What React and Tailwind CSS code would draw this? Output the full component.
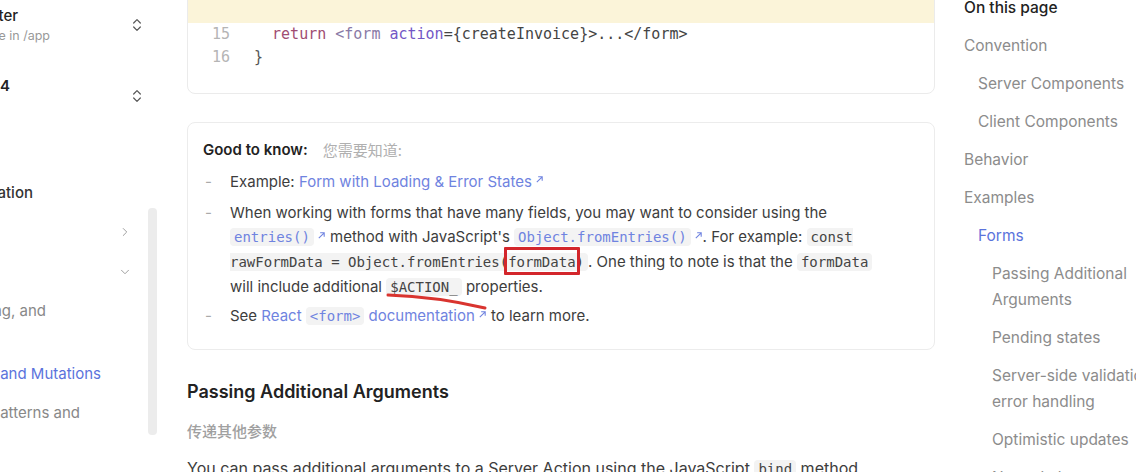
import React from 'react';
import { ChevronsUpDown, ChevronRight, ChevronDown } from 'lucide-react';

// small "external link" arrow used after doc links
const Ext = () => (
  <svg className="inline-block w-[9px] h-[9px] ml-[3px] mb-[6px] align-middle" viewBox="0 0 10 10" fill="none" stroke="currentColor" strokeWidth="1.2">
    <path d="M2 8L8 2M3.5 2H8v4.5" />
  </svg>
);

const Code = ({ children, link }) => (
  <code className={`font-['DejaVu_Sans_Mono',monospace] text-[14px] bg-[#f3f3f3] rounded px-[4px] py-[1px] ${link ? 'text-[#6f83e0]' : 'text-[#444]'}`}>
    {children}
  </code>
);

// text that is cut off by the left edge of the sidebar
const Clip = ({ end, children, className }) => (
  <div className={`flex justify-end ${className}`} style={{ width: end }}>
    <span className="whitespace-nowrap shrink-0">{children}</span>
  </div>
);

const Sidebar = () => (
  <div className="w-[187px] shrink-0 flex overflow-hidden">
    <div className="w-[148px] shrink-0 flex flex-col">
      {/* router switcher */}
      <div className="mt-[6px] h-[40px] flex items-center justify-between pr-[3px]">
        <div className="flex flex-col">
          <Clip end={18} className="h-[20px] items-center text-[15px] font-medium text-[#222]">App Router</Clip>
          <Clip end={50} className="h-[20px] items-center text-[12.5px] text-[#999]">Features available in /app</Clip>
        </div>
        <ChevronsUpDown size={16} strokeWidth={1.8} className="text-[#555] -mt-[2px]" />
      </div>
      {/* version switcher */}
      <div className="mt-[30px] h-[38px] flex items-center justify-between pr-[3px]">
        <div className="flex flex-col">
          <Clip end={10} className="h-[20px] items-center text-[15px] font-semibold text-[#222]">Version 14</Clip>
          <Clip end={0} className="h-[18px] items-center text-[12.5px] text-[#999]">v14</Clip>
        </div>
        <ChevronsUpDown size={16} strokeWidth={1.8} className="text-[#555] mt-[2px]" />
      </div>

      <Clip end={33} className="mt-[66px] h-[26px] items-center text-[15px] font-medium text-[#333]">Building Your Application</Clip>

      <div className="mt-[13px] h-[26px] flex items-center justify-end pr-[16px]">
        <ChevronRight size={14} strokeWidth={1.6} className="text-[#999]" />
      </div>
      <div className="mt-[14px] h-[26px] flex items-center justify-end pr-[16px]">
        <ChevronDown size={14} strokeWidth={1.6} className="text-[#999]" />
      </div>

      <Clip end={46} className="mt-[13px] h-[26px] items-center text-[15px] text-[#888]">Fetching, Caching, and</Clip>
      <Clip end={0} className="h-[24px] items-center text-[15px] text-[#888]">Revalidating</Clip>

      <Clip end={101} className="mt-[13px] h-[26px] items-center text-[15px] text-[#5b73dc]">Server Actions and Mutations</Clip>

      <Clip end={80} className="mt-[13px] h-[26px] items-center text-[15px] text-[#888]">Data Fetching Patterns and</Clip>
      <Clip end={0} className="h-[24px] items-center text-[15px] text-[#888]">Best Practices</Clip>
    </div>
    {/* scrollbar */}
    <div className="w-[9px] shrink-0 mt-[208px] h-[227px] bg-[#ececec] rounded-sm" />
  </div>
);

const CodeBlock = () => (
  <div className="-mt-[10px] border border-[#ebebeb] rounded-lg overflow-hidden font-['DejaVu_Sans_Mono',monospace] text-[15px] pb-[24px]">
    <div className="h-[32px] bg-[#fbf4d9]" />
    <div className="flex h-[23px] items-center pl-[24px]">
      <span className="w-[42px] text-[#b5b5b5]">15</span>
      <span className="whitespace-pre text-[#444]">
        {'  '}<span className="text-[#a04d72]">return</span> <span className="text-[#8a7aa6]">&lt;form</span> <span className="text-[#7357c6]">action</span>={'{'}createInvoice{'}'}&gt;...&lt;/form&gt;
      </span>
    </div>
    <div className="flex h-[23px] items-center pl-[24px]">
      <span className="w-[42px] text-[#b5b5b5]">16</span>
      <span className="text-[#555]">{'}'}</span>
    </div>
  </div>
);

const GoodToKnow = () => (
  <div className="mt-[28px] border border-[#ececec] rounded-lg px-[15px] pt-[15px] pb-[20px] text-[15px] text-[#3d3d3d] leading-[23.7px]">
    <div className="flex items-center gap-[15px]">
      <span className="font-semibold text-[#222]">Good to know:</span>
      <span className="text-[#b0b0b0] font-['Noto_Sans_CJK_SC',sans-serif] text-[15px]">您需要知道:</span>
    </div>
    <ul className="mt-[8px] flex flex-col">
      <li className="flex">
        <span className="w-[27px] shrink-0 pl-[2px] text-[#aaa]">-</span>
        <span>Example: <span className="text-[#6f83e0]">Form with Loading &amp; Error States<Ext /></span></span>
      </li>
      <li className="flex mt-[8px]">
        <span className="w-[27px] shrink-0 pl-[2px] text-[#aaa]">-</span>
        <span className="w-[664px]">
          When working with forms that have many fields, you may want to consider using the{' '}
          <Code link>entries()</Code><span className="text-[#6f83e0]"><Ext /></span> method with JavaScript's{' '}
          <Code link>Object.fromEntries()</Code><span className="text-[#6f83e0]"><Ext /></span>. For example:{' '}
          <code className="font-['DejaVu_Sans_Mono',monospace] text-[14px] bg-[#f3f3f3] rounded px-[4px] py-[1px] text-[#444]">
            const rawFormData = Object.fromEntries
            <span className="relative">
              (formData)
              <span className="absolute left-[4px] right-[4px] -top-[7px] -bottom-[5px] border-[3px] border-[#d3262b] rounded-[1px]" />
            </span>
          </code>
          . One thing to note is that the <Code>formData</Code> will include additional{' '}
          <span className="relative">
            <Code>$ACTION_</Code>
            <svg className="absolute left-[1px] top-[16px] w-[100px] h-[18px] overflow-visible" viewBox="0 0 100 18" fill="none">
              <path d="M1 2 C30 3, 68 8, 98 15" stroke="#d9342f" strokeWidth="3" strokeLinecap="round" />
            </svg>
          </span>{' '}
          properties.
        </span>
      </li>
      <li className="flex mt-[5px]">
        <span className="w-[27px] shrink-0 pl-[2px] text-[#aaa]">-</span>
        <span>
          See <span className="text-[#6f83e0]">React <Code link>&lt;form&gt;</Code> documentation<Ext /></span> to learn more.
        </span>
      </li>
    </ul>
  </div>
);

const toc = [
  { t: ['Convention'], l: 0 },
  { t: ['Server Components'], l: 1 },
  { t: ['Client Components'], l: 1 },
  { t: ['Behavior'], l: 0 },
  { t: ['Examples'], l: 0 },
  { t: ['Forms'], l: 1, active: true },
  { t: ['Passing Additional', 'Arguments'], l: 2 },
  { t: ['Pending states'], l: 2 },
  { t: ['Server-side validation and', 'error handling'], l: 2 },
  { t: ['Optimistic updates'], l: 2 },
  { t: ['Nested elements'], l: 2 },
];

const Toc = () => (
  <div className="ml-[29px] flex-1 overflow-hidden">
    <div className="-mt-[5px] w-[240px] flex flex-col gap-[12px] text-[15.5px] leading-[26px]">
      <div className="font-medium text-[#222]">On this page</div>
      {toc.map((i) => (
        <div
          key={i.t[0]}
          className={`whitespace-nowrap ${i.l === 0 ? '' : i.l === 1 ? 'pl-[14px]' : 'pl-[28px]'} ${i.active ? 'text-[#5b73dc]' : 'text-[#8c8c8c]'}`}
        >
          {i.t.map((line) => (
            <div key={line}>{line}</div>
          ))}
        </div>
      ))}
    </div>
  </div>
);

export default function App() {
  return (
    <div className="w-[1136px] h-[472px] overflow-hidden bg-white flex font-[Inter,'Noto_Sans_CJK_SC',sans-serif]">
      <Sidebar />
      <main className="w-[748px] shrink-0">
        <CodeBlock />
        <GoodToKnow />
        <h2 className="mt-[28px] text-[18px] leading-[28px] font-semibold text-[#222]">Passing Additional Arguments</h2>
        <div className="mt-[11px] text-[15px] leading-[28px] text-[#a0a0a0] font-['Noto_Sans_CJK_SC',sans-serif] font-medium">传递其他参数</div>
        <p className="mt-[10px] text-[16px] leading-[26px] text-[#3d3d3d]">
          You can pass additional arguments to a Server Action using the JavaScript <Code>bind</Code> method.
        </p>
      </main>
      <Toc />
    </div>
  );
}
